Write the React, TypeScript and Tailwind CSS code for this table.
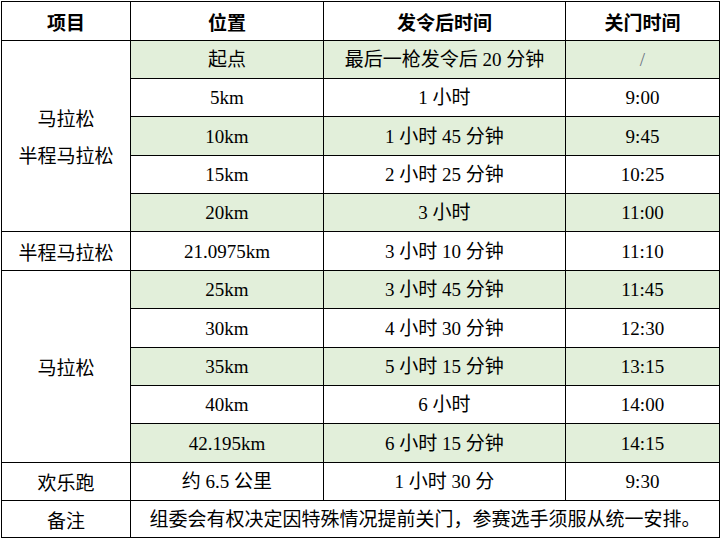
import React from 'react';

interface Row {
  pos: string;
  after: string;
  close: string;
  green: boolean;
}

const marathonRows: Row[] = [
  { pos: '起点', after: '最后一枪发令后 20 分钟', close: '/', green: true },
  { pos: '5km', after: '1 小时', close: '9:00', green: false },
  { pos: '10km', after: '1 小时 45 分钟', close: '9:45', green: true },
  { pos: '15km', after: '2 小时 25 分钟', close: '10:25', green: false },
  { pos: '20km', after: '3 小时', close: '11:00', green: true },
];

const fullRows: Row[] = [
  { pos: '25km', after: '3 小时 45 分钟', close: '11:45', green: true },
  { pos: '30km', after: '4 小时 30 分钟', close: '12:30', green: false },
  { pos: '35km', after: '5 小时 15 分钟', close: '13:15', green: true },
  { pos: '40km', after: '6 小时', close: '14:00', green: false },
  { pos: '42.195km', after: '6 小时 15 分钟', close: '14:15', green: true },
];

// 每行高度，对齐原图的网格线
const H = [39, 38, 38, 39, 38, 38, 39, 38, 39, 38, 38, 39, 38, 37];

const cell = 'border border-black text-center align-middle p-0';

const DataCells: React.FC<{ row: Row }> = ({ row }) => {
  const bg = row.green ? 'bg-[#e2efda]' : 'bg-white';
  return (
    <>
      <td className={`${cell} ${bg}`}>{row.pos}</td>
      <td className={`${cell} ${bg}`}>{row.after}</td>
      <td className={`${cell} ${bg} ${row.pos === '起点' ? 'text-gray-500' : ''}`}>{row.close}</td>
    </>
  );
};

const App: React.FC = () => {
  return (
    <div className="w-[721px] h-[540px] bg-white overflow-hidden pt-px pl-px">
      <table
        className="w-[718px] table-fixed border-collapse text-[19px] text-black leading-none"
        style={{ fontFamily: '"Liberation Serif", "Noto Sans CJK SC", serif' }}
      >
        <colgroup>
          <col className="w-[129px]" />
          <col className="w-[193px]" />
          <col className="w-[242px]" />
          <col className="w-[154px]" />
        </colgroup>
        <tbody>
          <tr style={{ height: H[0] }}>
            {['项目', '位置', '发令后时间', '关门时间'].map((t) => (
              <th key={t} className={`${cell} font-bold font-['Noto_Sans_CJK_SC',sans-serif]`}>
                {t}
              </th>
            ))}
          </tr>

          {marathonRows.map((row, i) => (
            <tr key={row.pos} style={{ height: H[1 + i] }}>
              {i === 0 && (
                <td rowSpan={5} className={`${cell} bg-white leading-[37px] font-['Noto_Sans_CJK_SC',sans-serif]`}>
                  马拉松
                  <br />
                  半程马拉松
                </td>
              )}
              <DataCells row={row} />
            </tr>
          ))}

          <tr style={{ height: H[6] }}>
            <td className={`${cell} font-['Noto_Sans_CJK_SC',sans-serif]`}>半程马拉松</td>
            <DataCells row={{ pos: '21.0975km', after: '3 小时 10 分钟', close: '11:10', green: false }} />
          </tr>

          {fullRows.map((row, i) => (
            <tr key={row.pos} style={{ height: H[7 + i] }}>
              {i === 0 && (
                <td rowSpan={5} className={`${cell} bg-white font-['Noto_Sans_CJK_SC',sans-serif]`}>
                  马拉松
                </td>
              )}
              <DataCells row={row} />
            </tr>
          ))}

          <tr style={{ height: H[12] }}>
            <td className={`${cell} font-['Noto_Sans_CJK_SC',sans-serif]`}>欢乐跑</td>
            <DataCells row={{ pos: '约 6.5 公里', after: '1 小时 30 分', close: '9:30', green: false }} />
          </tr>

          <tr style={{ height: H[13] }}>
            <td className={`${cell} font-['Noto_Sans_CJK_SC',sans-serif]`}>备注</td>
            <td colSpan={3} className={cell}>
              组委会有权决定因特殊情况提前关门，参赛选手须服从统一安排。
            </td>
          </tr>
        </tbody>
      </table>
    </div>
  );
};

export default App;
